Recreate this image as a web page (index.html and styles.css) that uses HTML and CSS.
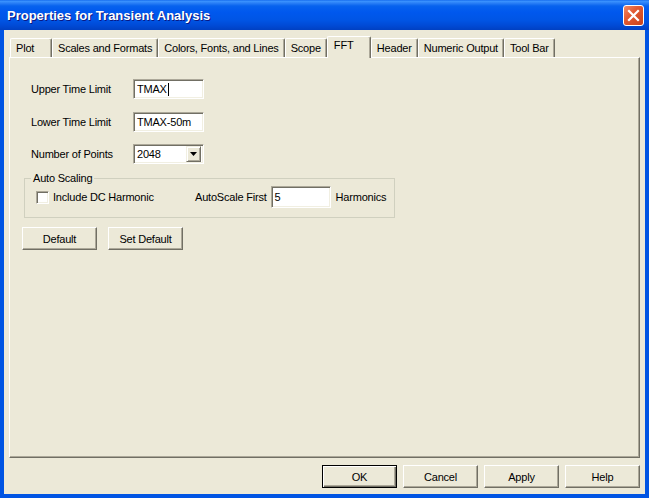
FILE: index.html
```html
<!DOCTYPE html>
<html lang="en">
<head>
    <meta charset="UTF-8">
    <title>Properties for Transient Analysis</title>
    <link rel="stylesheet" href="styles.css">
</head>
<body>
    <div class="window">
        <!-- title bar -->
        <div class="titlebar">
            <span class="title">Properties for Transient Analysis</span>
            <div class="close-btn">
                <svg width="13" height="13" viewBox="0 0 13 13">
                    <path d="M2 2 L11 11 M11 2 L2 11" stroke="#fff" stroke-width="2.2" stroke-linecap="square"/>
                </svg>
            </div>
        </div>

        <div class="frame">
            <!-- tab strip -->
            <div class="tabs">
                <div class="tab tab-min">Plot</div>
                <div class="tab">Scales and Formats</div>
                <div class="tab">Colors, Fonts, and Lines</div>
                <div class="tab">Scope</div>
                <div class="tab selected">FFT</div>
                <div class="tab">Header</div>
                <div class="tab">Numeric Output</div>
                <div class="tab">Tool Bar</div>
            </div>

            <!-- FFT page -->
            <div class="panel">
                <div class="form-grid">
                    <span class="label">Upper Time Limit</span>
                    <div class="field">TMAX<span class="caret"></span></div>

                    <span class="label">Lower Time Limit</span>
                    <div class="field">TMAX-50m</div>

                    <span class="label">Number of Points</span>
                    <div class="field combo">
                        <span>2048</span>
                        <span class="drop-btn">
                            <svg width="7" height="4" viewBox="0 0 7 4"><path d="M0 0 H7 L3.5 4 Z" fill="#000"/></svg>
                        </span>
                    </div>
                </div>

                <div class="group">
                    <span class="group-title">Auto Scaling</span>
                    <div class="group-row">
                        <div class="check-wrap">
                            <span class="checkbox"></span>
                            <span>Include DC Harmonic</span>
                        </div>
                        <span>AutoScale First</span>
                        <div class="field small">5</div>
                        <span class="after">Harmonics</span>
                    </div>
                </div>

                <div class="page-buttons">
                    <div class="btn">Default</div>
                    <div class="btn">Set Default</div>
                </div>
            </div>

            <!-- dialog buttons -->
            <div class="dialog-buttons">
                <div class="btn default">OK</div>
                <div class="btn">Cancel</div>
                <div class="btn">Apply</div>
                <div class="btn">Help</div>
            </div>
        </div>
    </div>
</body>
</html>
```

FILE: styles.css
```css
html, body {
    margin: 0;
    padding: 0;
    background-color: #0054e3;
}
body {
    font-family: "Liberation Sans", Arial, sans-serif;
    font-size: 11px;
    letter-spacing: -0.2px;
    color: #000;
}
.window {
    width: 649px;
    height: 498px;
    display: flex;
    flex-direction: column;
    overflow: hidden;
}
.titlebar {
    height: 30px;
    flex: none;
    display: flex;
    align-items: center;
    justify-content: space-between;
    padding: 0 5px 0 7px;
    box-sizing: border-box;
    background: linear-gradient(#0a5fe8 0px, #3d95ff 1px, #2b80f6 3px, #0762ee 6px, #0058ee 12px, #0055e5 20px, #0049d4 26px, #0040c2 30px);
}
.title {
    color: #fff;
    font-size: 13px;
    font-weight: bold;
    letter-spacing: 0;
    text-shadow: 1px 1px 0 #0a1883;
    margin-top: 1px;
}
.close-btn {
    width: 21px;
    height: 21px;
    box-sizing: border-box;
    border: 1px solid #fff;
    border-radius: 3px;
    background: linear-gradient(135deg, #f08a66 0%, #e25a33 40%, #c9431b 100%);
    display: flex;
    align-items: center;
    justify-content: center;
    margin-top: 1px;
}
.frame {
    flex: 1;
    background-color: #ece9d8;
    margin: 0 4px 4px 4px;
    padding: 6px 5px 0 5px;
    display: flex;
    flex-direction: column;
}
.tabs {
    display: flex;
    align-items: flex-end;
    height: 21px;
    padding-left: 1px;
}
.tab {
    height: 19px;
    line-height: 19px;
    min-width: 40px;
    padding: 0 5px;
    box-sizing: border-box;
    text-align: center;
    border-top: 1px solid #fff;
    border-left: 1px solid #fff;
    border-right: 1px solid #716f64;
    box-shadow: inset -1px 0 #aca899;
    border-radius: 2px 2px 0 0;
    white-space: nowrap;
}
.tab-min {
    min-width: 42px;
    text-align: left;
}
.tab.selected {
    height: 22px;
    line-height: 17px;
    min-width: 44px;
    margin-bottom: -1px;
    padding: 0 6px;
    background-color: #ece9d8;
    position: relative;
    z-index: 1;
    text-align: left;
}
.panel {
    height: 401px;
    box-sizing: border-box;
    border-top: 1px solid #fff;
    border-left: 1px solid #fff;
    border-right: 1px solid #716f64;
    border-bottom: 1px solid #716f64;
    box-shadow: inset -1px -1px #aca899;
    padding: 21px 0 0 12px;
}
.form-grid {
    display: grid;
    grid-template-columns: 102px 71px;
    grid-auto-rows: 20px;
    row-gap: 12.5px;
    align-items: center;
    margin-left: 9px;
}
.field {
    height: 20px;
    box-sizing: border-box;
    background-color: #fff;
    border-top: 1px solid #aca899;
    border-left: 1px solid #aca899;
    border-right: 1px solid #fff;
    border-bottom: 1px solid #fff;
    box-shadow: inset 1px 1px #716f64, inset -1px -1px #f1efe2;
    padding: 0 3px;
    line-height: 18px;
    display: flex;
    align-items: center;
}
.caret {
    display: inline-block;
    width: 1px;
    height: 13px;
    background-color: #000;
    margin-left: 1px;
}
.combo {
    justify-content: space-between;
    padding-right: 2px;
}
.drop-btn {
    width: 15px;
    height: 16px;
    box-sizing: border-box;
    background-color: #ece9d8;
    border-top: 1px solid #f1efe2;
    border-left: 1px solid #f1efe2;
    border-right: 1px solid #716f64;
    border-bottom: 1px solid #716f64;
    box-shadow: inset 1px 1px #fff, inset -1px -1px #aca899;
    display: flex;
    align-items: center;
    justify-content: center;
}
.group {
    position: relative;
    margin: 14px 0 0 2px;
    width: 371px;
    box-sizing: border-box;
    border: 1px solid #d0d0bf;
    padding: 7px 0 9px 11px;
}
.group-title {
    position: absolute;
    top: -7px;
    left: 6px;
    padding: 0 2px;
    background-color: #ece9d8;
}
.group-row {
    display: flex;
    align-items: center;
    height: 22px;
}
.check-wrap {
    width: 159px;
    display: flex;
    align-items: center;
    gap: 4px;
}
.checkbox {
    width: 13px;
    height: 13px;
    box-sizing: border-box;
    background-color: #fff;
    border-top: 1px solid #aca899;
    border-left: 1px solid #aca899;
    border-right: 1px solid #fff;
    border-bottom: 1px solid #fff;
    box-shadow: inset 1px 1px #716f64, inset -1px -1px #f1efe2;
}
.field.small {
    width: 60px;
    height: 22px;
    margin-left: 4px;
}
.after {
    margin-left: 5px;
}
.page-buttons {
    display: flex;
    gap: 11px;
    margin-top: 9px;
}
.btn {
    width: 75px;
    height: 23px;
    box-sizing: border-box;
    display: flex;
    align-items: center;
    justify-content: center;
    background-color: #ece9d8;
    border-top: 1px solid #fff;
    border-left: 1px solid #fff;
    border-right: 1px solid #716f64;
    border-bottom: 1px solid #716f64;
    box-shadow: inset -1px -1px #aca899;
}
.btn.default {
    border: 1px solid #000;
    box-shadow: inset 1px 1px #fff, inset -1px -1px #716f64, inset -2px -2px #aca899;
}
.dialog-buttons {
    display: flex;
    justify-content: flex-end;
    gap: 6px;
    margin-top: 7px;
}
```
